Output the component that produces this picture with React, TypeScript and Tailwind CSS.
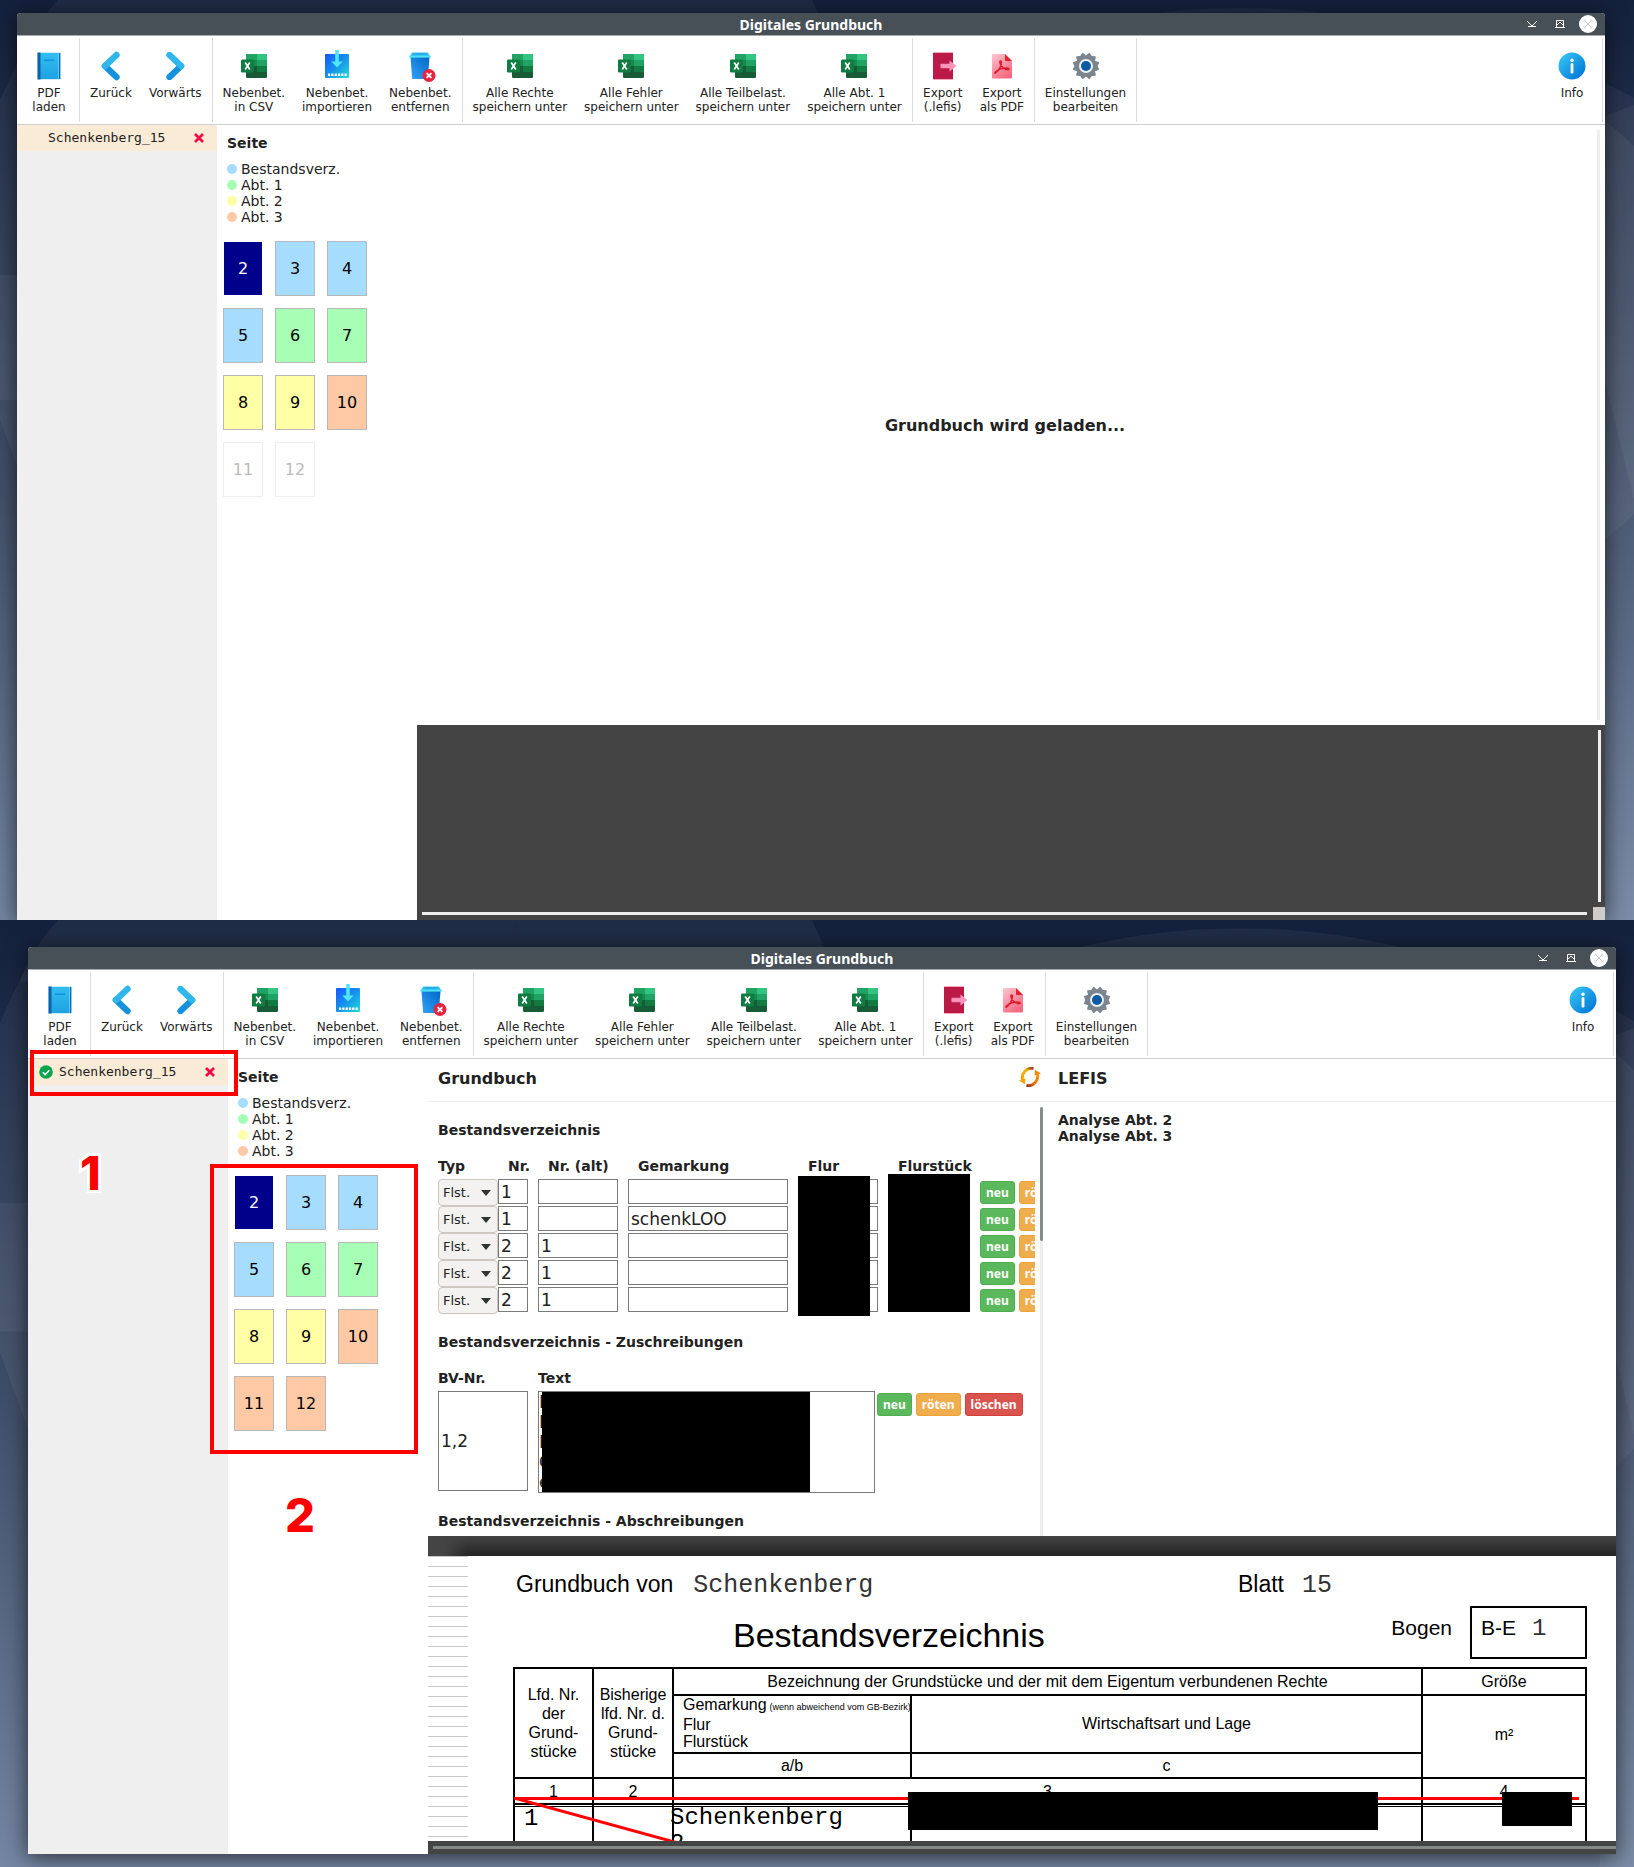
import React from "react";

const ICON = "block h-7 w-7 overflow-visible";

function BookIcon() {
  return (
    <svg viewBox="0 0 28 28" className={ICON} aria-hidden="true">
      <defs>
        <linearGradient id="book" x1="0" y1="0" x2="0" y2="1">
          <stop offset="0" stopColor="#32bdef" />
          <stop offset="1" stopColor="#1ea2e4" />
        </linearGradient>
      </defs>
      <rect x="2.500" y="0.500" width="23.500" height="27" rx="1" fill="#a9dcf5" />
      <rect x="3" y="1" width="20.500" height="26" fill="url(#book)" />
      <rect x="2.500" y="0.500" width="3" height="27" fill="#0d62ad" />
      <rect x="24" y="1" width="1.200" height="26" fill="#0f6cbd" />
      <path d="M9 8.200h10" stroke="#1490df" strokeWidth="1.600" />
    </svg>
  );
}

function ChevronIcon({ flip = false }: { flip?: boolean }) {
  return (
    <svg viewBox="0 0 28 28" className={flip ? "block h-7 w-7 -scale-x-100" : ICON} aria-hidden="true">
      <path d="M8 14 19.500 25" stroke="#1592de" strokeWidth="6.400" strokeLinecap="round" />
      <path d="M19.500 3 8 14" stroke="#2fb7ec" strokeWidth="6.400" strokeLinecap="round" />
      <path d="M4.700 14 8.200 10.500 12 14 8.200 17.600Z" fill="#2fb7ec" />
    </svg>
  );
}

function SheetIcon() {
  return (
    <svg viewBox="0 0 28 28" className={ICON} aria-hidden="true">
      <rect x="6" y="2" width="21" height="24" rx="1.200" fill="#185c37" />
      <path d="M7.200 2H17v6H6V3.200A1.200 1.200 0 0 1 7.200 2Z" fill="#21a366" />
      <path d="M17 2h8.800a1.200 1.200 0 0 1 1.200 1.200V8H17Z" fill="#33c481" />
      <rect x="6" y="8" width="11" height="6" fill="#16894d" />
      <rect x="17" y="8" width="10" height="6" fill="#21a366" />
      <rect x="6" y="14" width="11" height="6" fill="#185c37" />
      <rect x="17" y="14" width="10" height="6" fill="#107c41" />
      <rect x="1" y="7.500" width="13" height="13" rx="1.200" fill="#107c41" />
      <path d="M5.200 10.500 9.800 17.500M9.800 10.500 5.200 17.500" stroke="#fff" strokeWidth="1.700" />
    </svg>
  );
}

function ImportIcon() {
  return (
    <svg viewBox="0 0 28 28" className={ICON} aria-hidden="true">
      <defs>
        <linearGradient id="imp" x1="0" y1="0" x2="1" y2="1">
          <stop offset="0" stopColor="#1554ff" />
          <stop offset="0.500" stopColor="#1593ec" />
          <stop offset="1" stopColor="#25dcd8" />
        </linearGradient>
      </defs>
      <rect x="2" y="2" width="24" height="24" rx="1" fill="url(#imp)" />
      <path d="M12.200-2h3.600V9.500h4L14 15.500 8.200 9.500h4Z" fill="#50e6ff" />
      <path d="M5 22.700h19" stroke="#fff" strokeWidth="2.400" strokeDasharray="2.200 1.100" />
    </svg>
  );
}

function TrashIcon() {
  return (
    <svg viewBox="0 0 28 28" className={ICON} aria-hidden="true">
      <defs>
        <linearGradient id="bin" x1="1" y1="0" x2="0" y2="1">
          <stop offset="0" stopColor="#0068c8" />
          <stop offset="1" stopColor="#32a2f7" />
        </linearGradient>
      </defs>
      <path d="M4.500 5h19l-1.700 22H6.200Z" fill="url(#bin)" />
      <path d="M6 .500h16l2.500 4.500h-21Z" fill="#35c5ef" />
      <path d="M7.500 2h13" stroke="#1a9be4" strokeWidth="1.200" />
      <rect x="3.300" y="3.800" width="21.400" height="1.800" fill="#4fe3fb" />
      <circle cx="23" cy="23.500" r="6.500" fill="#e8233d" />
      <path d="m20.600 21.100 4.800 4.800m0-4.800-4.800 4.800" stroke="#fff" strokeWidth="1.800" />
    </svg>
  );
}

function ExportIcon() {
  return (
    <svg viewBox="0 0 28 28" className={ICON} aria-hidden="true">
      <rect x="4" y="0" width="20" height="28" rx="1" fill="#f3a9bd" />
      <rect x="4" y="1" width="20" height="26" fill="#bb1a48" />
      <path d="M11.500 11.800h9V8.500L27.500 14l-7 5.500v-3.300h-9Z" fill="#ff94b8" />
    </svg>
  );
}

function PdfIcon() {
  return (
    <svg viewBox="0 0 28 28" className={ICON} aria-hidden="true">
      <defs>
        <linearGradient id="pdf" x1="0" y1="0" x2="0.600" y2="1">
          <stop offset="0" stopColor="#ffc6d1" />
          <stop offset="1" stopColor="#f46a82" />
        </linearGradient>
      </defs>
      <path d="M5 2h12l7 7v16.500a1 1 0 0 1-1 1H5a1 1 0 0 1-1-1V3a1 1 0 0 1 1-1Z" fill="url(#pdf)" />
      <path d="M17 2v6a1 1 0 0 0 1 1h6Z" fill="#e5202f" />
      <path
        d="M7.300 21.300c3.600-2.600 6.600-8 6.100-11.600-.200-1.300-1.700-1.100-1.600.300.200 3.300 3.700 7.600 8.300 7.700 1.400 0 1.300-1.500-.200-1.600-4.200-.200-9.500 1.300-12.300 3.600-.900.800-.800 1.900-.300 1.600Z"
        fill="none"
        stroke="#e0182a"
        strokeWidth="1.400"
      />
    </svg>
  );
}

function GearIcon() {
  return (
    <svg viewBox="0 0 28 28" className={ICON} aria-hidden="true">
      <g fill="#7b858e">
        <circle cx="14" cy="14" r="10.500" />
        {[0, 60, 120, 180, 240, 300].map((a) => (
          <path key={a} d="M8.500 6 10 1.200Q10.300.800 11 1l3 1.400L17 1q.700-.200 1 .200L19.500 6Z" transform={`rotate(${a + 30} 14 14)`} />
        ))}
      </g>
      <circle cx="14" cy="14" r="7" fill="#eef1f4" />
      <circle cx="14" cy="14" r="5" fill="#0c59a4" />
    </svg>
  );
}

function InfoIcon() {
  return (
    <svg viewBox="0 0 28 28" className={ICON} aria-hidden="true">
      <defs>
        <linearGradient id="inf" x1="0.100" y1="0.100" x2="0.900" y2="0.900">
          <stop offset="0" stopColor="#36c2f2" />
          <stop offset="1" stopColor="#0078d8" />
        </linearGradient>
      </defs>
      <circle cx="14" cy="14" r="13.500" fill="url(#inf)" />
      <circle cx="14" cy="8.200" r="1.700" fill="#fff" />
      <rect x="12.600" y="11.300" width="2.800" height="10.200" rx="0.800" fill="#fff" />
    </svg>
  );
}

function RefreshIcon() {
  return (
    <svg viewBox="0 0 22 20" className="block h-5 w-[22px]" aria-hidden="true">
      <defs>
        <linearGradient id="rl" x1="0" y1="1" x2="1" y2="0">
          <stop offset="0" stopColor="#f5a100" />
          <stop offset="0.600" stopColor="#efb400" />
          <stop offset="1" stopColor="#9b3410" />
        </linearGradient>
        <linearGradient id="rr" x1="1" y1="0" x2="0" y2="1">
          <stop offset="0" stopColor="#f59a10" />
          <stop offset="0.600" stopColor="#e86f08" />
          <stop offset="1" stopColor="#8f2b10" />
        </linearGradient>
      </defs>
      <path d="M14.500 1.600C8 .200 1.800 6 3.600 13.500" fill="none" stroke="url(#rl)" strokeWidth="3" />
      <path d="M0 13.600 6.500 11.500 6 17.200Z" fill="#f5a300" />
      <path d="M7.500 18.400C14 19.800 20.200 14 18.400 6.500" fill="none" stroke="url(#rr)" strokeWidth="3" />
      <path d="M22 6.400 15.500 8.500 16 2.800Z" fill="#f08a10" />
    </svg>
  );
}

type Tool = { lines: string[]; icon: React.ReactNode };

const toolGroups: Tool[][] = [
  [{ lines: ["PDF", "laden"], icon: <BookIcon /> }],
  [
    { lines: ["Zurück"], icon: <ChevronIcon /> },
    { lines: ["Vorwärts"], icon: <ChevronIcon flip /> },
  ],
  [
    { lines: ["Nebenbet.", "in CSV"], icon: <SheetIcon /> },
    { lines: ["Nebenbet.", "importieren"], icon: <ImportIcon /> },
    { lines: ["Nebenbet.", "entfernen"], icon: <TrashIcon /> },
  ],
  [
    { lines: ["Alle Rechte", "speichern unter"], icon: <SheetIcon /> },
    { lines: ["Alle Fehler", "speichern unter"], icon: <SheetIcon /> },
    { lines: ["Alle Teilbelast.", "speichern unter"], icon: <SheetIcon /> },
    { lines: ["Alle Abt. 1", "speichern unter"], icon: <SheetIcon /> },
  ],
  [
    { lines: ["Export", "(.lefis)"], icon: <ExportIcon /> },
    { lines: ["Export", "als PDF"], icon: <PdfIcon /> },
  ],
  [{ lines: ["Einstellungen", "bearbeiten"], icon: <GearIcon /> }],
];

function ToolButton({ tool }: { tool: Tool }) {
  return (
    <button type="button" className="flex min-w-14 flex-col items-center gap-[6px] px-2 pt-[14px] text-xs leading-[14px]">
      {tool.icon}
      <span className="flex flex-col items-center whitespace-nowrap">
        {tool.lines.map((l) => (
          <span key={l}>{l}</span>
        ))}
      </span>
    </button>
  );
}

function TitleBar() {
  return (
    <div className="relative flex h-[23px] items-center justify-center rounded-t border-b border-[#a9adaf] bg-[#475057]">
      <span className="pt-[2px] font-['Noto_Sans'] text-sm leading-5 font-bold text-white">Digitales Grundbuch</span>
      <div className="absolute top-[2px] right-2 flex gap-[10px]">
        <button type="button" aria-label="Minimieren" className="h-[18px] w-[18px]">
          <svg viewBox="0 0 18 18" className="h-[18px] w-[18px]" fill="none" stroke="#fff">
            <path d="m4 6 5 5 5-5M5 11.500h8" />
          </svg>
        </button>
        <button type="button" aria-label="Maximieren" className="h-[18px] w-[18px]">
          <svg viewBox="0 0 18 18" className="h-[18px] w-[18px]" fill="none" stroke="#fff">
            <path d="M5.500 12V5.500h7V12M4 12.500h10M5.500 10.500 9 7l3.500 3.500" />
          </svg>
        </button>
        <button type="button" aria-label="Schließen" className="h-[18px] w-[18px] rounded-full bg-white">
          <svg viewBox="0 0 18 18" className="h-[18px] w-[18px]" fill="none" stroke="#c8c8c8">
            <path d="m5 5 8 8m0-8-8 8" />
            <path d="M5 7V5h2m4 0h2v2m0 4v2h-2m-4 0H5v-2" stroke="#dedede" />
          </svg>
        </button>
      </div>
    </div>
  );
}

function Toolbar() {
  return (
    <div className="flex h-[89px] border-b border-[#cfcfcf] p-[2px]">
      {toolGroups.map((g, i) => (
        <div key={i} className="flex items-start gap-px border-r border-[#dcdcdc] px-[2px]">
          {g.map((t) => (
            <ToolButton key={t.lines.join(" ")} tool={t} />
          ))}
        </div>
      ))}
      <div className="ml-auto flex items-start border-r border-[#dcdcdc] px-[2px]">
        <ToolButton tool={{ lines: ["Info"], icon: <InfoIcon /> }} />
      </div>
    </div>
  );
}

function FileList({ done }: { done: boolean }) {
  return (
    <aside className="w-[200px] shrink-0 bg-[#efefef]">
      <div className="flex h-[26px] items-center bg-[#faebd7] pr-[13px] pl-[11px]">
        <span className="h-[14px] w-5">
          {done && (
            <svg viewBox="0 0 14 14" className="h-[14px] w-[14px]" role="img" aria-label="Fertig">
              <circle cx="7" cy="7" r="6.800" fill="#0aa34f" />
              <path d="m3.800 7.200 2.300 2.300 4.200-4.200" fill="none" stroke="#fff" strokeWidth="1.600" />
            </svg>
          )}
        </span>
        <span className="font-['DejaVu_Sans_Mono'] text-[13px] leading-4">Schenkenberg_15</span>
        <button type="button" aria-label="Datei schließen" className="ml-auto">
          <svg viewBox="0 0 10 10" className="h-[10px] w-[10px]">
            <path d="m1 1 8 8m0-8-8 8" stroke="#f50a48" strokeWidth="2.700" />
          </svg>
        </button>
      </div>
    </aside>
  );
}

const legend = [
  { label: "Bestandsverz.", dot: "bg-[#a6ddff]" },
  { label: "Abt. 1", dot: "bg-[#a6ffb5]" },
  { label: "Abt. 2", dot: "bg-[#ffffa6]" },
  { label: "Abt. 3", dot: "bg-[#ffc9a6]" },
];

const tone: Record<string, string> = {
  active: "bg-[#00008b] text-white border-white",
  bv: "bg-[#a6ddff] text-black border-[#b8b8b8]",
  a1: "bg-[#a6ffb5] text-black border-[#b8b8b8]",
  a2: "bg-[#ffffa6] text-black border-[#b8b8b8]",
  a3: "bg-[#ffc9a6] text-black border-[#b8b8b8]",
  off: "bg-white text-[#bbb] border-[#eee]",
};

function PageList({ done }: { done: boolean }) {
  const last = done ? "a3" : "off";
  const tones = ["active", "bv", "bv", "bv", "a1", "a1", "a2", "a2", "a3", last, last];
  return (
    <nav className="w-[200px] shrink-0 pt-[10px]" aria-label="Seite">
      <h2 className="pl-[10px] text-sm leading-4 font-bold">Seite</h2>
      <ul className="mt-[10px] pl-[10px] text-sm leading-4">
        {legend.map((l) => (
          <li key={l.label} className="flex items-center gap-1">
            <span className={`h-[10px] w-[10px] rounded-full ${l.dot}`} />
            {l.label}
          </li>
        ))}
      </ul>
      <div className="mt-4 grid grid-cols-[40px_40px_40px] gap-3 pl-[6px]">
        {tones.map((t, i) => (
          <button key={i} type="button" disabled={t === "off"} className={`h-[55px] border text-base ${tone[t]}`}>
            {i + 2}
          </button>
        ))}
      </div>
    </nav>
  );
}

function AppWindow({ done, children }: { done: boolean; children: React.ReactNode }) {
  return (
    <div className="relative flex flex-col rounded-t bg-white text-[#222] shadow-[0_3px_22px_rgba(0,0,0,0.65)]">
      <TitleBar />
      <Toolbar />
      <div className="flex">
        <FileList done={done} />
        <PageList done={done} />
        <main className="min-w-0 flex-1">{children}</main>
      </div>
    </div>
  );
}

function Wallpaper() {
  return (
    <svg className="absolute inset-0 h-full w-full" viewBox="0 0 1634 920" preserveAspectRatio="none" aria-hidden="true">
      <g fill="#fff" fillOpacity="0.050">
        <path d="M58 0H518L500 60H20Q30 30 58 0Z" />
        <path d="M518 0H812L840 60H500Z" />
        <ellipse cx="1240" cy="330" rx="480" ry="322" />
        <path d="M0 100Q18 60 30 40V400H0Z" />
        <path d="M1600 80 1634 98V920H1600Z" />
        <path d="M1600 118 1634 105V500L1600 360Z" />
        <path d="M0 275H30V500L0 420Z" />
      </g>
    </svg>
  );
}

const bvRows = [
  ["1", "", ""],
  ["1", "", "schenkLOO"],
  ["2", "1", ""],
  ["2", "1", ""],
  ["2", "1", ""],
];

const actionTone: Record<string, string> = {
  neu: "bg-[#5cb85c] border-[#4cae4c]",
  röten: "bg-[#f0ad4e] border-[#eea236]",
  löschen: "bg-[#d9534f] border-[#d43f3a]",
};

function Actions() {
  return (
    <div className="mt-[2px] flex shrink-0 gap-1">
      {Object.keys(actionTone).map((a) => (
        <button
          key={a}
          type="button"
          className={`h-[23px] shrink-0 rounded-[3px] border px-[5px] font-['Noto_Sans'] text-xs leading-4 font-bold text-white ${actionTone[a]}`}
        >
          {a}
        </button>
      ))}
    </div>
  );
}

const FIELD = "h-[25px] shrink-0 border border-[#7a7a7a] bg-white px-[2px] text-[17px]";

function RegisterForm() {
  return (
    <div className="min-w-0 flex-1 overflow-hidden pt-5 pb-[7px] pl-[10px] text-sm leading-4">
      <h3 className="font-bold">Bestandsverzeichnis</h3>
      <div className="mt-5 grid grid-cols-[70px_40px_90px_170px_90px_90px] font-bold whitespace-nowrap">
        <span>Typ</span>
        <span>Nr.</span>
        <span>Nr. (alt)</span>
        <span>Gemarkung</span>
        <span>Flur</span>
        <span>Flurstück</span>
      </div>
      <div className="relative mt-[5px]">
        {bvRows.map((r, i) => (
          <div key={i} className="flex h-[27px] items-start">
            <span className="relative shrink-0">
              <select
                aria-label="Typ"
                className="block h-[27px] w-[60px] appearance-none rounded border border-[#cdc7c2] bg-[#f3f2f1] pl-1 text-[13px]"
              >
                <option>Flst.</option>
              </select>
              <svg viewBox="0 0 10 6" className="pointer-events-none absolute top-[11px] right-[7px] h-[6px] w-[10px]">
                <path d="M0 0h10L5 6Z" fill="#2e3436" />
              </svg>
            </span>
            <input aria-label="Nr." defaultValue={r[0]} className={`${FIELD} w-[30px]`} />
            <input aria-label="Nr. (alt)" defaultValue={r[1]} className={`${FIELD} ml-[10px] w-20`} />
            <input aria-label="Gemarkung" defaultValue={r[2]} className={`${FIELD} ml-[10px] w-40`} />
            <input aria-label="Flur" className={`${FIELD} ml-[10px] w-20`} />
            <input aria-label="Flurstück" className={`${FIELD} mr-3 ml-[10px] w-20`} />
            <Actions />
          </div>
        ))}
        <div className="absolute -top-[3px] left-[360px] h-[140px] w-[72px] bg-black" />
        <div className="absolute -top-[5px] left-[450px] h-[138px] w-[82px] bg-black" />
      </div>

      <h3 className="mt-5 font-bold">Bestandsverzeichnis - Zuschreibungen</h3>
      <div className="mt-5 grid grid-cols-[100px_1fr] font-bold">
        <label htmlFor="bvnr">BV-Nr.</label>
        <label htmlFor="bvtext">Text</label>
      </div>
      <div className="mt-[5px] flex items-start">
        <input id="bvnr" defaultValue="1,2" className="h-[100px] w-[90px] border border-[#7a7a7a] px-[2px] text-[17px]" />
        <div className="relative ml-[10px]">
          <textarea
            id="bvtext"
            defaultValue={"L\nL\nL\nG\ne"}
            className="block h-[102px] w-[337px] resize-none overflow-hidden border border-[#7a7a7a] text-[17px] leading-5"
          />
          <div className="absolute top-px left-1 h-[100px] w-[268px] bg-black" />
        </div>
        <div className="ml-[2px]">
          <Actions />
        </div>
      </div>
      <h3 className="mt-5 font-bold">Bestandsverzeichnis - Abschreibungen</h3>
    </div>
  );
}

const TYPED = "font-['Liberation_Mono',monospace]";

function ScannedPage() {
  return (
    <div className="bg-[#444]">
      <div className="relative h-[305px] overflow-hidden">
        <div className="h-5 bg-linear-to-b from-[#444] to-[#242424]">
          <div className="h-5 w-10 bg-linear-to-r from-[#444] from-40% to-transparent" />
        </div>
        <div className="flex bg-white">
          <div className="w-10 shrink-0 bg-[repeating-linear-gradient(#c9c9c9_0_1px,#fff_1px_10px)]" />
          <div className="min-w-0 flex-1 pt-[14px] pr-[29px] pl-[46px] font-['Liberation_Sans'] text-black">
            <div className="flex h-7 items-baseline text-[23px] leading-7 whitespace-nowrap">
              <span className="ml-[2px]">Grundbuch von</span>
              <span className={`ml-5 text-[25px] text-[#333] ${TYPED}`}>Schenkenberg</span>
              <span className="ml-auto">Blatt</span>
              <span className={`mr-[255px] ml-[18px] text-[25px] text-[#333] ${TYPED}`}>15</span>
            </div>
            <div className="mt-2 flex h-[61px] items-start text-[21px] leading-6">
              <span className="mt-[9px] ml-[219px] text-[34px] leading-10">Bestandsverzeichnis</span>
              <span className="mt-[10px] ml-auto">Bogen</span>
              <div className="ml-[18px] flex h-[53px] w-[117px] items-baseline border-2 border-black pt-2 pl-[9px]">
                <span>B-E</span>
                <span className={`ml-4 text-[24px] text-[#333] ${TYPED}`}>1</span>
              </div>
            </div>
            <div className="relative -ml-px">
              <table className="w-full table-fixed border-collapse text-center text-base leading-[19px] [&_td]:border-2 [&_td]:border-black [&_td]:p-0 [&_th]:border-2 [&_th]:border-black [&_th]:p-0 [&_th]:font-normal">
                <colgroup>
                  <col className="w-[79px]" />
                  <col className="w-20" />
                  <col className="w-[238px]" />
                  <col />
                  <col className="w-[164px]" />
                </colgroup>
                <thead>
                  <tr className="h-[27px]">
                    <th rowSpan={3}>
                      Lfd. Nr.
                      <br />
                      der
                      <br />
                      Grund-
                      <br />
                      stücke
                    </th>
                    <th rowSpan={3}>
                      Bisherige
                      <br />
                      lfd. Nr. d.
                      <br />
                      Grund-
                      <br />
                      stücke
                    </th>
                    <th colSpan={2}>Bezeichnung der Grundstücke und der mit dem Eigentum verbundenen Rechte</th>
                    <th>Größe</th>
                  </tr>
                  <tr className="h-[58px]">
                    <th className="pb-[2px]! pl-[9px]! text-left leading-[17px] whitespace-nowrap">
                      Gemarkung<span className="ml-[3px] text-[9px]">(wenn abweichend vom GB-Bezirk)</span>
                      <br />
                      Flur
                      <br />
                      Flurstück
                    </th>
                    <th className="pb-[2px]!">Wirtschaftsart und Lage</th>
                    <th rowSpan={2} className="pb-1!">
                      m²
                    </th>
                  </tr>
                  <tr className="h-[25px]">
                    <th>a/b</th>
                    <th>c</th>
                  </tr>
                  <tr className="h-[26px]">
                    <th>1</th>
                    <th>2</th>
                    <th colSpan={2}>3</th>
                    <th>4</th>
                  </tr>
                </thead>
                <tbody className={TYPED}>
                  <tr className="h-[60px] text-left align-top text-[24px] leading-[26px]">
                    <td className="pt-px! pl-[9px]!">1</td>
                    <td />
                    <td>
                      <div className="-ml-1">
                        Schenkenberg
                        <br />2
                      </div>
                    </td>
                    <td />
                    <td />
                  </tr>
                </tbody>
              </table>
              <div className="absolute top-[139px] right-px left-px h-px bg-black" />
              <div className="absolute top-[130px] right-2 left-px h-[3px] bg-[#f00]" />
              <svg className="absolute top-[131px] left-px h-[45px] w-[164px]" viewBox="0 0 164 45" aria-hidden="true">
                <path d="M0 0 164 45" stroke="#f00" strokeWidth="3" />
              </svg>
              <div className="absolute top-[125px] right-[209px] left-[395px] h-[38px] bg-black" />
              <div className="absolute top-[125px] right-[15px] h-[34px] w-[70px] bg-black" />
            </div>
          </div>
        </div>
      </div>
      <div className="relative h-[13px] bg-[#444] pt-[5px] pl-[5px]">
        <div className="h-[3px] bg-[#868b8a]" />
      </div>
    </div>
  );
}

const MARK =
  "absolute font-['Inter'] text-[47px] leading-[46px] font-extrabold text-[#f00] [-webkit-text-stroke:6px_white] [paint-order:stroke_fill]";

export default function App() {
  return (
    <div className="min-h-screen font-['DejaVu_Sans',sans-serif]">
      <section className="relative overflow-hidden bg-linear-to-b from-[#14213d] via-[#3f4e68] to-[#7486a2] pt-[13px] pr-[29px] pl-[17px]">
        <Wallpaper />
        <AppWindow done={false}>
          <div className="flex min-h-[600px] py-[5px]">
            <div className="flex flex-1 items-center justify-center">
              <p className="pt-[2px] font-bold">Grundbuch wird geladen...</p>
            </div>
            <div className="mr-[5px] ml-1 w-[3px] bg-[#eee]" />
          </div>
          <div className="flex h-[195px] flex-col bg-[#444]">
            <div className="flex flex-1 justify-end pt-[5px] pr-[4px] pb-[5px]">
              <div className="w-[3px] bg-[#eee]" />
            </div>
            <div className="flex h-[13px] items-center pl-[5px]">
              <div className="h-[3px] flex-1 bg-[#eee]" />
              <div className="ml-[6px] h-[13px] w-3 bg-[#cfcdcc]" />
            </div>
          </div>
        </AppWindow>
      </section>

      <section className="relative overflow-hidden bg-linear-to-b from-[#14213d] via-[#3f4e68] to-[#7486a2] pt-[27px] pr-[18px] pb-[13px] pl-7">
        <Wallpaper />
        <AppWindow done>
          <div className="grid min-h-[477px] grid-cols-[620fr_568fr] grid-rows-[43px_1fr]">
            <header className="flex items-start justify-between border-b border-[#eee] pt-2 pr-[7px] pl-[10px]">
              <h2 className="mt-[2px] leading-5 font-bold">Grundbuch</h2>
              <button type="button" aria-label="Neu laden">
                <RefreshIcon />
              </button>
            </header>
            <header className="border-b border-[#eee] pt-[10px] pl-[10px]">
              <h2 className="leading-5 font-bold">LEFIS</h2>
            </header>
            <div className="flex min-w-0">
              <RegisterForm />
              <div className="mt-[5px] mr-[5px] ml-[5px] w-[3px] shrink-0 bg-[#eee]">
                <div className="h-[134px] rounded-sm bg-[#868b8a]" />
              </div>
            </div>
            <div className="pt-[10px] pl-[10px] text-sm leading-4 font-bold">
              <p>Analyse Abt. 2</p>
              <p>Analyse Abt. 3</p>
            </div>
          </div>
          <ScannedPage />
        </AppWindow>
        <div className="pointer-events-none absolute top-[130px] left-[30px] h-[46px] w-[208px] border-4 border-[#f00]" />
        <div className="pointer-events-none absolute top-[244px] left-[210px] h-[290px] w-[208px] border-4 border-[#f00]" />
        <span className={`${MARK} top-[230px] left-[80px]`}>1</span>
        <span className={`${MARK} top-[572px] left-[285px]`}>2</span>
      </section>
    </div>
  );
}
